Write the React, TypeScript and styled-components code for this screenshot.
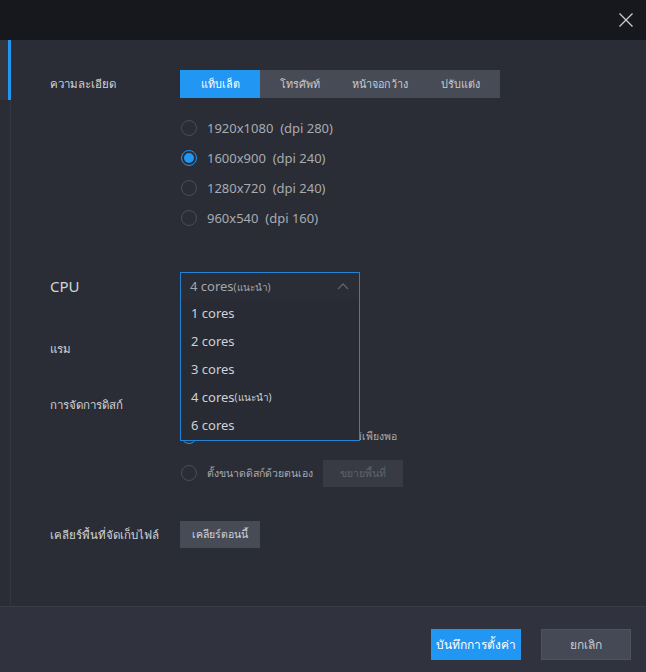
import React from 'react';
import styled, { createGlobalStyle } from 'styled-components';

const GlobalStyle = createGlobalStyle`
  html, body {
    margin: 0;
    padding: 0;
    background: #2a2d35;
  }
  body {
    font-family: "Noto Sans", "Open Sans", "DejaVu Sans", sans-serif;
  }
  * {
    box-sizing: border-box;
  }
`;

const BLUE = '#2196f3';

const Window = styled.div`
  width: 646px;
  height: 672px;
  display: flex;
  flex-direction: column;
  background: #2a2d35;
  overflow: hidden;
`;

const Header = styled.div`
  height: 40px;
  flex: none;
  background: #16181d;
  display: flex;
  justify-content: flex-end;
  align-items: center;
  padding-right: 10px;
`;

const CloseButton = styled.button`
  width: 20px;
  height: 20px;
  padding: 0;
  border: none;
  background: transparent;
  display: flex;
  align-items: center;
  justify-content: center;
  cursor: pointer;
`;

const Body = styled.div`
  flex: 1;
  display: flex;
  min-height: 0;
`;

const Sidebar = styled.div`
  width: 11px;
  flex: none;
  display: flex;
  flex-direction: column;
  background: #2a2d35;
  border-right: 1px solid #343740;
`;

const SideItem = styled.div<{ $active?: boolean }>`
  height: 60px;
  background: ${(p) => (p.$active ? '#33363e' : 'transparent')};
  border-right: 3px solid ${(p) => (p.$active ? BLUE : 'transparent')};
  margin-right: -1px;
`;

const Content = styled.div`
  flex: 1;
  padding: 30px 0 0 39px;
  display: flex;
  flex-direction: column;
`;

const Row = styled.div<{ $top?: number }>`
  display: grid;
  grid-template-columns: 130px 1fr;
  align-items: start;
  margin-top: ${(p) => p.$top ?? 0}px;
`;

const Label = styled.div<{ $size?: number }>`
  height: 28px;
  display: flex;
  align-items: center;
  color: #d3d5da;
  font-size: ${(p) => p.$size ?? 11.5}px;
  white-space: nowrap;
`;

const Tabs = styled.div`
  display: flex;
  width: 320px;
  height: 28px;
  background: #474b56;
`;

const Tab = styled.div<{ $active?: boolean }>`
  width: 80px;
  display: flex;
  align-items: center;
  justify-content: center;
  font-size: 10.8px;
  color: ${(p) => (p.$active ? '#ffffff' : '#c9ccd2')};
  background: ${(p) => (p.$active ? BLUE : 'transparent')};
`;

const RadioList = styled.div<{ $top?: number; $gap?: number }>`
  display: flex;
  flex-direction: column;
  gap: ${(p) => p.$gap ?? 0}px;
  margin-top: ${(p) => p.$top ?? 0}px;
`;

const RadioRow = styled.label<{ $size?: number }>`
  height: 30px;
  display: flex;
  align-items: center;
  gap: 10px;
  color: #a8abb2;
  font-size: ${(p) => p.$size ?? 13}px;
  white-space: pre;
`;

const RadioCircle = styled.span<{ $checked?: boolean }>`
  width: 16px;
  height: 16px;
  flex: none;
  border-radius: 50%;
  border: 1px solid ${(p) => (p.$checked ? BLUE : '#4a4d56')};
  display: flex;
  align-items: center;
  justify-content: center;
  margin-left: 1px;
  &::after {
    content: '';
    width: 10px;
    height: 10px;
    border-radius: 50%;
    background: ${(p) => (p.$checked ? BLUE : 'transparent')};
  }
`;

const SelectWrap = styled.div`
  position: relative;
  width: 180px;
`;

const SelectBox = styled.div<{ $open?: boolean }>`
  height: 28px;
  border: 1px solid ${(p) => (p.$open ? '#2583d6' : '#474b56')};
  background: #2a2d35;
  display: flex;
  align-items: center;
  justify-content: space-between;
  padding: 0 10px 0 9px;
  color: #a3a6ad;
  font-size: 13px;
`;

const Menu = styled.div`
  position: absolute;
  top: 27px;
  left: 0;
  width: 180px;
  background: #282b33;
  border: 1px solid #2583d6;
  border-top: none;
  z-index: 10;
  padding-bottom: 1px;
`;

const MenuItem = styled.div`
  height: 28px;
  display: flex;
  align-items: center;
  padding-left: 10px;
  color: #cfd1d6;
  font-size: 13px;
`;

const Thai = styled.span`
  font-size: 10px;
`;

const GrayButton = styled.button<{ $disabled?: boolean }>`
  width: 80px;
  height: 27px;
  border: none;
  padding: 0;
  font-family: inherit;
  font-size: 10.5px;
  background: ${(p) => (p.$disabled ? '#383b44' : '#474b56')};
  color: ${(p) => (p.$disabled ? '#5f636c' : '#d3d5da')};
`;

const Footer = styled.div`
  height: 66px;
  flex: none;
  background: #30333d;
  border-top: 1px solid #3a3d47;
  display: flex;
  justify-content: flex-end;
  align-items: center;
  gap: 20px;
  padding: 9px 15px 0 0;
`;

const FooterButton = styled.button<{ $primary?: boolean }>`
  width: 90px;
  height: 31px;
  padding: 0;
  font-family: inherit;
  font-size: 12px;
  color: ${(p) => (p.$primary ? '#ffffff' : '#c9ccd2')};
  background: ${(p) => (p.$primary ? BLUE : '#454955')};
  border: 1px solid ${(p) => (p.$primary ? BLUE : '#4f535e')};
`;

const resolutions = [
  { label: '1920x1080  (dpi 280)', checked: false },
  { label: '1600x900  (dpi 240)', checked: true },
  { label: '1280x720  (dpi 240)', checked: false },
  { label: '960x540  (dpi 160)', checked: false },
];

const cores = ['1 cores', '2 cores', '3 cores', '4 cores', '6 cores'];

const Chevron = () => (
  <svg width="12" height="8" viewBox="0 0 12 8">
    <path d="M1 7 L6 2 L11 7" fill="none" stroke="#5f636c" strokeWidth="1.3" />
  </svg>
);

const CloseIcon = () => (
  <svg width="16" height="16" viewBox="0 0 16 16">
    <path d="M1.5 1.5 L14.5 14.5 M14.5 1.5 L1.5 14.5" stroke="#c9ccd2" strokeWidth="1.3" />
  </svg>
);

const App: React.FC = () => {
  return (
    <Window>
      <GlobalStyle />
      <Header>
        <CloseButton>
          <CloseIcon />
        </CloseButton>
      </Header>
      <Body>
        <Sidebar>
          <SideItem $active />
        </Sidebar>
        <Content>
          <Row>
            <Label>ความละเอียด</Label>
            <div>
              <Tabs>
                <Tab $active>แท็บเล็ต</Tab>
                <Tab>โทรศัพท์</Tab>
                <Tab>หน้าจอกว้าง</Tab>
                <Tab>ปรับแต่ง</Tab>
              </Tabs>
              <RadioList $top={15}>
                {resolutions.map((r) => (
                  <RadioRow key={r.label}>
                    <RadioCircle $checked={r.checked} />
                    <span>{r.label}</span>
                  </RadioRow>
                ))}
              </RadioList>
            </div>
          </Row>

          <Row $top={39}>
            <Label $size={15}>CPU</Label>
            <SelectWrap>
              <SelectBox $open>
                <span>
                  4 cores<Thai>(แนะนำ)</Thai>
                </span>
                <Chevron />
              </SelectBox>
              <Menu>
                {cores.map((c) => (
                  <MenuItem key={c}>
                    {c}
                    {c === '4 cores' && <Thai>(แนะนำ)</Thai>}
                  </MenuItem>
                ))}
              </Menu>
            </SelectWrap>
          </Row>

          <Row $top={35}>
            <Label>แรม</Label>
            <SelectWrap>
              <SelectBox />
            </SelectWrap>
          </Row>

          <Row $top={28}>
            <Label>การจัดการดิสก์</Label>
            <RadioList $top={30} $gap={7}>
              <RadioRow $size={10.5}>
                <RadioCircle $checked />
                <span>ขยายพื้นที่อัตโนมัติเมื่อพื้นที่ดิสก์ไม่เพียงพอ</span>
              </RadioRow>
              <RadioRow $size={10.5}>
                <RadioCircle />
                <span>ตั้งขนาดดิสก์ด้วยตนเอง</span>
                <GrayButton $disabled>ขยายพื้นที่</GrayButton>
              </RadioRow>
            </RadioList>
          </Row>

          <Row $top={33}>
            <Label>เคลียร์พื้นที่จัดเก็บไฟล์</Label>
            <div>
              <GrayButton>เคลียร์ตอนนี้</GrayButton>
            </div>
          </Row>
        </Content>
      </Body>
      <Footer>
        <FooterButton $primary>บันทึกการตั้งค่า</FooterButton>
        <FooterButton>ยกเลิก</FooterButton>
      </Footer>
    </Window>
  );
};

export default App;
